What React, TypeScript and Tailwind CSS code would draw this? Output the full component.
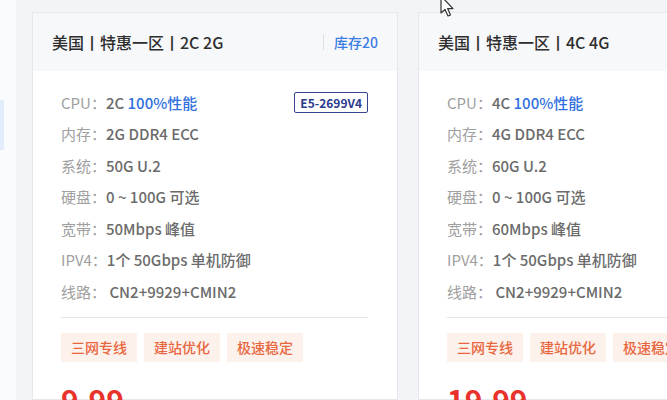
import React from "react"

interface Plan {
	title: string
	stock?: string
	cpu: string
	mem: string
	sys: string
	bw: string
	price: string
	badge?: string
}

const plans: Plan[] = [
	{
		title: "美国丨特惠一区丨2C 2G",
		stock: "库存20",
		cpu: "2C",
		mem: "2G DDR4 ECC",
		sys: "50G U.2",
		bw: "50Mbps 峰值",
		price: "9.99",
		badge: "E5-2699V4",
	},
	{
		title: "美国丨特惠一区丨4C 4G",
		cpu: "4C",
		mem: "4G DDR4 ECC",
		sys: "60G U.2",
		bw: "60Mbps 峰值",
		price: "19.99",
	},
]

const tags = ["三网专线", "建站优化", "极速稳定"]

function Row({ label, children }: { label: string; children: React.ReactNode }) {
	return (
		<div className="flex items-center h-[31.5px] text-[15px] whitespace-nowrap">
			<span className="text-[#a0a0a0]">{label}</span>
			<span className="text-[#6b6b6b] font-medium">{children}</span>
		</div>
	)
}

function PlanCard({ plan }: { plan: Plan }) {
	return (
		<div className="w-[366px] shrink-0 border border-[#e7e8eb] bg-white">
			<div className="h-[58px] bg-[#f7f8fa] flex items-center justify-between px-[19px]">
				<span className="text-[16px] font-medium text-[#2e2e2e] whitespace-nowrap">{plan.title}</span>
				{plan.stock && (
					<div className="flex items-center">
						<span className="w-px h-[16px] bg-[#dcdfe4] mr-[10px]" />
						<span className="text-[14px] font-medium text-[#3a7de3]">{plan.stock}</span>
					</div>
				)}
			</div>
			<div className="pl-[28px] pr-[29px] pt-[16px]">
				<div className="flex items-center justify-between">
					<Row label="CPU：">
						{plan.cpu} <span className="text-[#2f6fe0]">100%性能</span>
					</Row>
					{plan.badge && (
						<span className="h-[21px] px-[5px] border border-[#37448f] rounded-[2px] text-[12px] font-bold text-[#2d3b8c] leading-[19px]">
							{plan.badge}
						</span>
					)}
				</div>
				<Row label="内存：">{plan.mem}</Row>
				<Row label="系统：">{plan.sys}</Row>
				<Row label="硬盘：">0 ~ 100G 可选</Row>
				<Row label="宽带：">{plan.bw}</Row>
				<Row label="IPV4：">1个 50Gbps 单机防御</Row>
				<Row label="线路：">&nbsp;CN2+9929+CMIN2</Row>
				<div className="mt-[9px] h-px bg-[#e3e4e7]" />
				<div className="flex gap-[7px] mt-[15px] whitespace-nowrap">
					{tags.map((t) => (
						<span
							key={t}
							className="h-[29px] px-[10px] flex items-center bg-[#fdf1ec] text-[14px] text-[#e8673f] font-medium"
						>
							{t}
						</span>
					))}
				</div>
				<div className="mt-[22px] flex items-baseline gap-[6px] whitespace-nowrap">
					<span className="text-[30px] font-bold text-[#e8322b] leading-none">{plan.price}</span>
					<span className="text-[12px] text-[#999]">元/月</span>
				</div>
			</div>
		</div>
	)
}

export default function App() {
	return (
		<div
			className="relative w-[667px] h-[400px] overflow-hidden flex bg-[#f3f4f7]"
			style={{ fontFamily: '"Noto Sans CJK SC", "Noto Sans", sans-serif' }}
		>
			<div className="w-[16px] shrink-0 bg-[#fafbfc] pt-[100px]">
				<div className="w-[4px] h-[50px] bg-[#e4edfd]" />
			</div>
			<div className="flex gap-[20px] pl-[16px] pt-[12px]">
				{plans.map((p) => (
					<PlanCard key={p.title} plan={p} />
				))}
			</div>
			<svg
				className="absolute left-[439px] top-[-5px]"
				width="18"
				height="24"
				viewBox="0 0 18 24"
			>
				<path
					d="M2 1 L2 18 L6 14.5 L9 21 L11.5 20 L8.6 13.6 L14 13.6 Z"
					fill="#fff"
					stroke="#333"
					strokeWidth="1.2"
					strokeLinejoin="round"
				/>
			</svg>
		</div>
	)
}
